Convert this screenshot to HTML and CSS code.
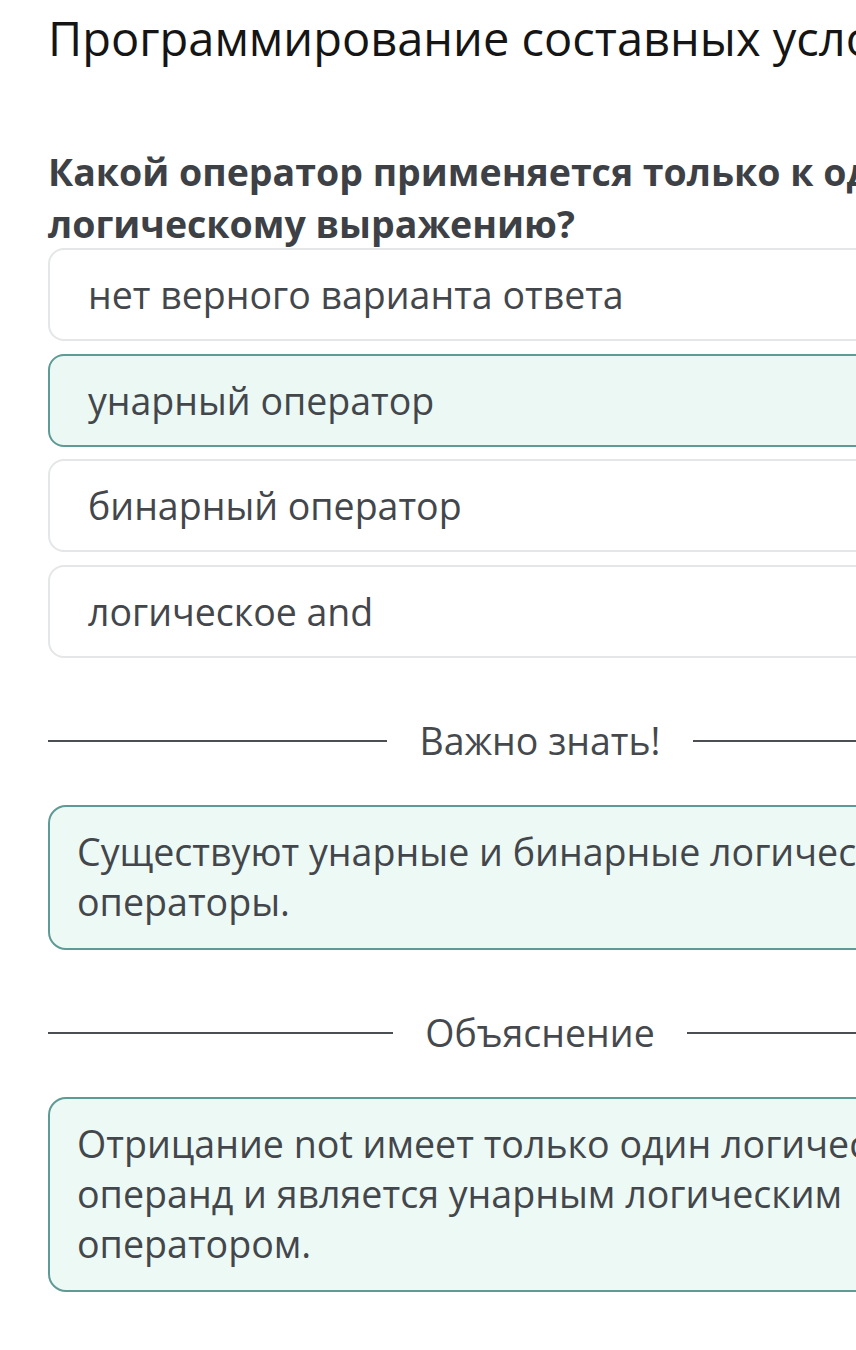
FILE: index.html
```html
<!DOCTYPE html>
<html lang="ru">
<head>
<meta charset="utf-8">
<link rel="stylesheet" href="styles.css">
</head>
<body>
<main class="page">
  <h1 class="title">Программирование составных условий</h1>
  <h2 class="question">Какой оператор применяется только к одному логическому выражению?</h2>
  <div class="options">
    <div class="option">нет верного варианта ответа</div>
    <div class="option selected">унарный оператор</div>
    <div class="option">бинарный оператор</div>
    <div class="option">логическое and</div>
  </div>
  <div class="divider"><span>Важно знать!</span></div>
  <div class="note">Существуют унарные и бинарные логические операторы.</div>
  <div class="divider"><span>Объяснение</span></div>
  <div class="note">Отрицание not имеет только один логический операнд и является унарным логическим оператором.</div>
</main>
</body>
</html>
```

FILE: styles.css
```css
html, body {
  margin: 0;
  padding: 0;
  background: #ffffff;
  overflow: hidden;
}
body {
  font-family: "Open Sans", "Noto Sans", sans-serif;
  color: #3f4347;
}
.page {
  width: 984px;
  padding: 0 0 0 48px;
}
.title {
  margin: 0;
  padding-top: 8px;
  font-size: 47px;
  font-weight: 400;
  line-height: 60px;
  color: #151515;
  white-space: nowrap;
}
.question {
  margin: 78px 0 0 0;
  font-size: 37.5px;
  font-weight: 700;
  line-height: 52px;
  color: #3d4146;
}
.options {
  display: flex;
  flex-direction: column;
  gap: 12.5px;
  margin-top: -2px;
}
.option {
  box-sizing: border-box;
  height: 93px;
  display: flex;
  align-items: center;
  padding-left: 38px;
  border: 2px solid #e4e6e7;
  border-radius: 16px;
  font-size: 37.5px;
  color: #43474b;
  background: #fff;
}
.option.selected {
  background: #ebf8f3;
  border-color: #5f9b96;
}
.divider {
  display: flex;
  align-items: center;
  gap: 32px;
  height: 50px;
  margin-top: 58px;
  font-size: 37.5px;
  color: #45494d;
}
.divider::before, .divider::after {
  content: "";
  flex: 1;
  height: 2px;
  background: #4b4f53;
}
.note {
  box-sizing: border-box;
  margin-top: 39px;
  margin-bottom: 1px;
  padding: 20px 27px 21px 27px;
  background: #edf9f4;
  border: 2px solid #5f9b96;
  border-radius: 18px;
  font-size: 37.6px;
  line-height: 50px;
  color: #43474b;
}
```
